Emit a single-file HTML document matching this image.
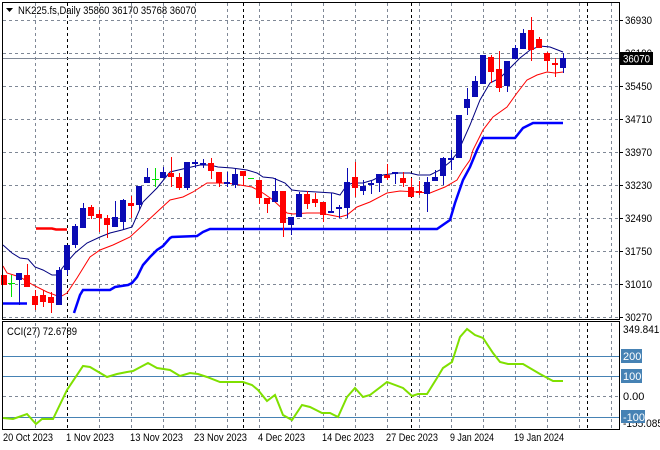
<!DOCTYPE html>
<html><head><meta charset="utf-8"><style>
html,body{margin:0;padding:0;background:#fff;}
svg{display:block;font-family:"Liberation Sans",sans-serif;font-size:11px;}
</style></head><body>
<svg width="660" height="450" viewBox="0 0 660 450" xmlns="http://www.w3.org/2000/svg">
<rect width="660" height="450" fill="#fff"/>
<g stroke="#7f8896" stroke-width="1" stroke-dasharray="3,3" fill="none">
<path d="M3 20.5H619M3 53.5H619M3 86.5H619M3 119.5H619M3 152.5H619M3 185.5H619M3 218.5H619M3 251.5H619M3 284.5H619M3 317.5H619M3 396.5H619"/>
<path d="M35.5 3V319M99.5 3V319M131.5 3V319M163.5 3V319M195.5 3V319M227.5 3V319M259.5 3V319M291.5 3V319M323.5 3V319M355.5 3V319M387.5 3V319M419.5 3V319M451.5 3V319M483.5 3V319M515.5 3V319M547.5 3V319M579.5 3V319M611.5 3V319"/>
<path d="M35.5 323V429M99.5 323V429M131.5 323V429M163.5 323V429M195.5 323V429M227.5 323V429M259.5 323V429M291.5 323V429M323.5 323V429M355.5 323V429M387.5 323V429M419.5 323V429M451.5 323V429M483.5 323V429M515.5 323V429M547.5 323V429M579.5 323V429M611.5 323V429"/>
</g>
<g stroke="#000" stroke-dasharray="3,3" fill="none">
<path d="M67.5 3V319M243.5 3V319M411.5 3V319M587.5 3V319M67.5 323V429M243.5 323V429M411.5 323V429M587.5 323V429"/>
</g>
<path d="M3 58.5H619" stroke="#7f8896"/>
<path d="M3 356.5H619M3 376.5H619M3 417.5H619" stroke="#4682b4"/>
<path d="M36 228.5H52L56 229.5H67" stroke="#f00" stroke-width="2.5" fill="none"/>
<path d="M3 303.5H27" stroke="#0000ff" stroke-width="2.5" fill="none"/>
<polyline fill="none" stroke="#0000ff" stroke-width="2.5" points="74,313 80,295 83,290 110,290 115,287 128,285 132,283 137,277 143,265 150,257 157,250 163,246 170,238 172,237 197,236 203,232 210,229 437,229 450,220 455,203 463,180 470,167 477,150 483,138 515,138 523,128 533,123 563,123"/>
<polyline fill="none" stroke="#000080" stroke-width="1" points="3,245 12,253 20,258 28,259 35,267 43,270 52,275 57,275 67,262 75,253 87,243 100,237 110,233 122,230 132,227 143,202 157,188 170,172 187,168 200,165 210,165 218,167 232,168 247,170 257,173 263,177 273,178 285,183 292,190 300,191 317,192 333,193 340,195 347,185 353,183 363,183 373,180 383,175 397,173 410,173 418,175 430,175 440,170 450,162 458,152 470,125 480,100 490,83 500,78 510,68 520,58 530,50 540,46 550,47 563,52"/>
<polyline fill="none" stroke="#f00" stroke-width="1" points="3,266 7,273 20,277 33,285 47,292 60,297 67,293 77,278 90,257 100,250 113,245 130,237 143,225 157,212 170,200 183,197 193,192 207,183 227,183 240,185 252,187 263,193 273,200 287,213 293,214 307,213 320,213 340,217 347,215 357,207 370,202 387,193 400,191 417,192 430,193 445,187 457,180 463,170 470,160 473,150 483,130 493,117 507,107 517,93 527,80 537,75 547,72 555,73 563,72"/>
<g stroke-width="1">
<g stroke="#f00" fill="#f00">
<path d="M27.5 264V287M35.5 290V310M43.5 290V307M51.5 292V313M91.5 205V219M99.5 210V232M107.5 215V238M131.5 196V218M171.5 157V187M179.5 173V190M211.5 158V179M219.5 172V187M243.5 171V185M259.5 180V204M267.5 198V213M283.5 191V237M307.5 191V209M315.5 193V207M323.5 202V222M355.5 162V197M387.5 164V180M403.5 172V187M411.5 178V197M419.5 181V195M491.5 55V83M499.5 51V92M531.5 17V61M539.5 37V48M547.5 52V71M555.5 58V77" fill="none"/>
<rect x="1" y="275" width="6" height="10" stroke="none"/>
<rect x="24" y="275" width="6" height="12" stroke="none"/>
<rect x="32" y="296" width="6" height="9" stroke="none"/>
<rect x="40" y="295" width="6" height="7" stroke="none"/>
<rect x="48" y="297" width="6" height="6" stroke="none"/>
<rect x="88" y="207" width="6" height="9" stroke="none"/>
<rect x="96" y="214" width="6" height="4" stroke="none"/>
<rect x="104" y="218" width="6" height="7" stroke="none"/>
<rect x="128" y="203" width="6" height="3" stroke="none"/>
<rect x="168" y="173" width="6" height="4" stroke="none"/>
<rect x="176" y="177" width="6" height="11" stroke="none"/>
<rect x="208" y="163" width="6" height="8" stroke="none"/>
<rect x="216" y="172" width="6" height="11" stroke="none"/>
<rect x="240" y="171" width="6" height="5" stroke="none"/>
<rect x="256" y="180" width="6" height="18" stroke="none"/>
<rect x="264" y="198" width="6" height="6" stroke="none"/>
<rect x="280" y="191" width="6" height="32" stroke="none"/>
<rect x="304" y="194" width="6" height="10" stroke="none"/>
<rect x="312" y="199" width="6" height="4" stroke="none"/>
<rect x="320" y="202" width="6" height="13" stroke="none"/>
<rect x="352" y="177" width="6" height="11" stroke="none"/>
<rect x="384" y="175" width="6" height="3" stroke="none"/>
<rect x="400" y="178" width="6" height="5" stroke="none"/>
<rect x="408" y="187" width="6" height="10" stroke="none"/>
<rect x="416" y="191" width="6" height="2" stroke="none"/>
<rect x="488" y="57" width="6" height="15" stroke="none"/>
<rect x="496" y="69" width="6" height="19" stroke="none"/>
<rect x="528" y="30" width="6" height="20" stroke="none"/>
<rect x="536" y="39" width="6" height="9" stroke="none"/>
<rect x="544" y="53" width="6" height="8" stroke="none"/>
<rect x="552" y="63" width="6" height="2" stroke="none"/>
</g>
<g stroke="#0a0ab4" fill="#0a0ab4">
<path d="M19.5 273V305M59.5 267V305M67.5 245V275M75.5 224V248M83.5 203V228M115.5 201V227M123.5 199V229M139.5 186V210M147.5 168V183M163.5 167V178M187.5 162V190M195.5 160V168M203.5 159V168M227.5 172V187M235.5 169V188M275.5 178V202M291.5 217V235M299.5 192V217M331.5 193V213M339.5 205V218M347.5 168V218M363.5 180V195M371.5 180V194M379.5 174V192M395.5 172V184M427.5 177V212M435.5 170V181M443.5 157V185M451.5 150V170M459.5 115V158M467.5 88V115M475.5 76V97M483.5 55V84M507.5 61V92M515.5 45V59M523.5 29V49M563.5 53V73" fill="none"/>
<rect x="16" y="273" width="6" height="7" stroke="none"/>
<rect x="56" y="270" width="6" height="35" stroke="none"/>
<rect x="64" y="245" width="6" height="25" stroke="none"/>
<rect x="72" y="226" width="6" height="19" stroke="none"/>
<rect x="80" y="208" width="6" height="20" stroke="none"/>
<rect x="112" y="217" width="6" height="10" stroke="none"/>
<rect x="120" y="200" width="6" height="22" stroke="none"/>
<rect x="136" y="186" width="6" height="19" stroke="none"/>
<rect x="144" y="177" width="6" height="6" stroke="none"/>
<rect x="160" y="172" width="6" height="6" stroke="none"/>
<rect x="184" y="162" width="6" height="26" stroke="none"/>
<rect x="192" y="162" width="6" height="2" stroke="none"/>
<rect x="200" y="163" width="6" height="2" stroke="none"/>
<rect x="224" y="182" width="6" height="2" stroke="none"/>
<rect x="232" y="174" width="6" height="11" stroke="none"/>
<rect x="272" y="191" width="6" height="11" stroke="none"/>
<rect x="288" y="217" width="6" height="8" stroke="none"/>
<rect x="296" y="194" width="6" height="23" stroke="none"/>
<rect x="328" y="211" width="6" height="2" stroke="none"/>
<rect x="336" y="207" width="6" height="2" stroke="none"/>
<rect x="344" y="182" width="6" height="26" stroke="none"/>
<rect x="360" y="186" width="6" height="5" stroke="none"/>
<rect x="368" y="183" width="6" height="2" stroke="none"/>
<rect x="376" y="174" width="6" height="9" stroke="none"/>
<rect x="392" y="172" width="6" height="2" stroke="none"/>
<rect x="424" y="182" width="6" height="12" stroke="none"/>
<rect x="432" y="177" width="6" height="4" stroke="none"/>
<rect x="440" y="158" width="6" height="18" stroke="none"/>
<rect x="448" y="158" width="6" height="2" stroke="none"/>
<rect x="456" y="115" width="6" height="43" stroke="none"/>
<rect x="464" y="99" width="6" height="9" stroke="none"/>
<rect x="472" y="81" width="6" height="16" stroke="none"/>
<rect x="480" y="55" width="6" height="29" stroke="none"/>
<rect x="504" y="61" width="6" height="25" stroke="none"/>
<rect x="512" y="48" width="6" height="11" stroke="none"/>
<rect x="520" y="33" width="6" height="16" stroke="none"/>
<rect x="560" y="58" width="6" height="10" stroke="none"/>
</g>
<g stroke="#00e000" fill="none">
<path d="M11.5 275V297M8 283.5H15M155.5 168V187M152 179.5H159M248 178.5H254"/>
</g>
</g>
<polyline fill="none" stroke="#7fe000" stroke-width="2" points="3,418 13,419 27,414 36,424 42,419 53,419 67,390 83,366 90,367 107,377 117,374 127,372 133,371 148,363 157,368 170,370 180,376 190,373 198,374 207,377 220,382 243,382 252,385 258,390 267,401 275,395 283,415 292,420 302,405 310,407 322,413 330,413 338,417 347,397 355,388 363,397 370,395 387,382 403,388 412,396 418,394 427,394 437,378 443,368 452,362 460,337 467,329 475,335 483,338 493,353 500,362 508,364 523,364 540,374 553,381 563,381"/>
<rect x="2.5" y="2.5" width="617" height="317" fill="none" stroke="#000"/>
<rect x="2.5" y="321.5" width="617" height="108" fill="none" stroke="#000"/>
<path d="M619 20.5h4M619 53.5h4M619 86.5h4M619 119.5h4M619 152.5h4M619 185.5h4M619 218.5h4M619 251.5h4M619 284.5h4M619 317.5h4" stroke="#000"/>
<path d="M6 8h7l-3.5 4z" fill="#000"/>
<text x="18" y="14" fill="#000" textLength="178" lengthAdjust="spacingAndGlyphs">NK225.fs,Daily  35860 36170 35768 36070</text>
<text x="7" y="335" fill="#000" textLength="70" lengthAdjust="spacingAndGlyphs">CCI(27) 72.6789</text>
<g fill="#000">
<text x="625" y="24" textLength="27" lengthAdjust="spacingAndGlyphs">36930</text>
<text x="625" y="57" textLength="27" lengthAdjust="spacingAndGlyphs">36190</text>
<text x="625" y="90" textLength="27" lengthAdjust="spacingAndGlyphs">35450</text>
<text x="625" y="123" textLength="27" lengthAdjust="spacingAndGlyphs">34710</text>
<text x="625" y="156" textLength="27" lengthAdjust="spacingAndGlyphs">33970</text>
<text x="625" y="189" textLength="27" lengthAdjust="spacingAndGlyphs">33230</text>
<text x="625" y="222" textLength="27" lengthAdjust="spacingAndGlyphs">32490</text>
<text x="625" y="255" textLength="27" lengthAdjust="spacingAndGlyphs">31750</text>
<text x="625" y="288" textLength="27" lengthAdjust="spacingAndGlyphs">31010</text>
<text x="625" y="321" textLength="27" lengthAdjust="spacingAndGlyphs">30270</text>
</g>
<rect x="620" y="52" width="33" height="13" fill="#000"/>
<text x="623" y="62.5" fill="#fff" textLength="27" lengthAdjust="spacingAndGlyphs">36070</text>
<text x="623" y="333" fill="#000" textLength="42" lengthAdjust="spacingAndGlyphs">349.8415</text>
<rect x="621" y="349" width="21" height="14" fill="#4682b4"/>
<text x="623" y="360" fill="#fff">200</text>
<rect x="621" y="369" width="21" height="14" fill="#4682b4"/>
<text x="623" y="380" fill="#fff">100</text>
<text x="623" y="400" fill="#000">0.00</text>
<text x="623" y="427" fill="#000" textLength="40" lengthAdjust="spacingAndGlyphs">-155.085</text>
<rect x="621" y="410" width="24" height="13" fill="#4682b4"/>
<text x="623" y="421" fill="#fff">-100</text>
<g fill="#000">
<text x="3" y="441" textLength="50" lengthAdjust="spacingAndGlyphs">20 Oct 2023</text>
<text x="66" y="441" textLength="48" lengthAdjust="spacingAndGlyphs">1 Nov 2023</text>
<text x="130" y="441" textLength="53" lengthAdjust="spacingAndGlyphs">13 Nov 2023</text>
<text x="194" y="441" textLength="53" lengthAdjust="spacingAndGlyphs">23 Nov 2023</text>
<text x="258" y="441" textLength="47" lengthAdjust="spacingAndGlyphs">4 Dec 2023</text>
<text x="322" y="441" textLength="52" lengthAdjust="spacingAndGlyphs">14 Dec 2023</text>
<text x="386" y="441" textLength="52" lengthAdjust="spacingAndGlyphs">27 Dec 2023</text>
<text x="450" y="441" textLength="44" lengthAdjust="spacingAndGlyphs">9 Jan 2024</text>
<text x="514" y="441" textLength="50" lengthAdjust="spacingAndGlyphs">19 Jan 2024</text>
</g>
</svg>
</body></html>
